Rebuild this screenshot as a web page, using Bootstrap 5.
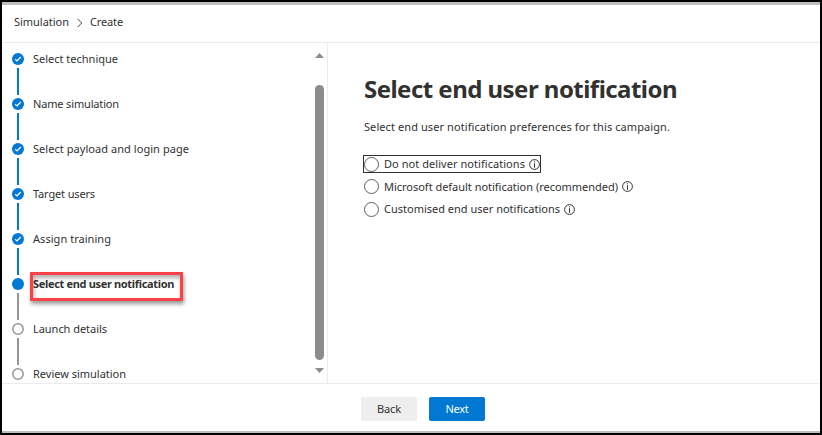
<!DOCTYPE html>
<html lang="en">
<head>
<meta charset="utf-8">
<meta name="viewport" content="width=device-width, initial-scale=1">
<title>Select end user notification</title>
<link rel="stylesheet" href="https://cdn.jsdelivr.net/npm/bootstrap@5.3.0/dist/css/bootstrap.min.css">
<style>
body{font-family:"Noto Sans","Open Sans",sans-serif;font-size:11px;line-height:16px;color:#323130;background:#fff}
.frame{height:435px;border:2px solid #000}
.edge-top{height:3px;background:#bebebe}
.edge-bottom{height:2px;background:#bebebe}
.crumbs{height:38px;border-bottom:1px solid #ebebeb;padding:0 0 3px 12px}
.crumbs svg{margin:1px 7px 0 8px}
.wizard{height:340px}
.side{width:326px;border-right:1px solid #ebebeb}
.steps{width:312px;padding:8px 0 0 10px}
.step{height:45px;flex:none}
.rail{width:12px;margin-right:9px}
.dot{width:12px;height:12px;margin:2px 0 3px;flex:none}
.line{width:2px;height:27px;background:#0078d4;flex:none}
.line.todo{background:#979593}
.callout-box{left:30px;top:272px;width:153px;height:29px;border:3px solid #fa4145;box-shadow:1px 3px 4px rgba(0,0,0,.4),inset 1px 3px 4px rgba(0,0,0,.32)}
.scroller{width:9px;padding:10px 0 9px;margin-left:1px}
.thumb{height:275px;border-radius:5px;background:#8a8d8a;margin:27px 0 8px}
.main-pane{padding:30px 0 0 36px}
h1{font-size:24px;line-height:32px;font-weight:700;margin:0}
.intro{margin:14px 0 20px}
.choice{height:18px;border:1px solid transparent;margin:0 0 4.5px -1px;width:max-content}
.choice.focused{border-color:#323130;width:178px}
.choice input{appearance:none;width:15px;height:15px;border:1px solid #605e5c;border-radius:50%;margin:0 5px 0 0;background:#fff;flex:none}
.choice svg{margin-left:4px}
.foot{height:48px;border-top:1px solid #ebebeb;padding:13px 0 0 359px;gap:12px}
.foot .btn{width:56px;height:24px;border-radius:2px;font-size:11px;line-height:22px;padding:0;border:0}
.btn-back{background:#eee;color:#323130}
.btn-next{background:#0078d4;color:#fff}
.fit{display:inline-block;white-space:nowrap}
</style>
<script src="https://cdn.jsdelivr.net/npm/bootstrap@5.3.0/dist/js/bootstrap.bundle.min.js"></script>
</head>
<body class="overflow-hidden">
<svg class="d-none">
<symbol id="done" viewBox="0 0 12 12"><circle cx="6" cy="6" r="6" fill="#0078d4"/><path d="M3.2 6.3 5 8 8.8 4" fill="none" stroke="#fff" stroke-width="1.2"/></symbol>
<symbol id="now" viewBox="0 0 12 12"><circle cx="6" cy="6" r="6" fill="#0078d4"/></symbol>
<symbol id="todo" viewBox="0 0 12 12"><circle cx="6" cy="6" r="5.2" fill="#fff" stroke="#979593" stroke-width="1.5"/></symbol>
<symbol id="info" viewBox="0 0 11 11"><circle cx="5.5" cy="5.5" r="4.9" fill="none" stroke="#323130"/><path d="M5.5 2.3v1.1M5.5 4.3v4.4" stroke="#323130"/></symbol>
</svg>
<div class="frame d-flex flex-column">
<div class="edge-top"></div>
<nav class="crumbs d-flex align-items-center" aria-label="breadcrumb">
<span class="fit" data-w="55">Simulation</span>
<svg width="6" height="10" viewBox="0 0 6 10"><path d="M.7 1 4.7 5 .7 9" fill="none" stroke="#484644"/></svg>
<span class="fit" data-w="33">Create</span>
</nav>
<div class="wizard d-flex overflow-hidden">
<aside class="side d-flex">
<div class="steps d-flex flex-column">
<div class="step d-flex"><div class="rail d-flex flex-column align-items-center"><svg class="dot"><use href="#done"/></svg><div class="line"></div></div><span class="fit" data-w="85">Select technique</span></div>
<div class="step d-flex"><div class="rail d-flex flex-column align-items-center"><svg class="dot"><use href="#done"/></svg><div class="line"></div></div><span class="fit" data-w="86">Name simulation</span></div>
<div class="step d-flex"><div class="rail d-flex flex-column align-items-center"><svg class="dot"><use href="#done"/></svg><div class="line"></div></div><span class="fit" data-w="156">Select payload and login page</span></div>
<div class="step d-flex"><div class="rail d-flex flex-column align-items-center"><svg class="dot"><use href="#done"/></svg><div class="line"></div></div><span class="fit" data-w="62">Target users</span></div>
<div class="step d-flex"><div class="rail d-flex flex-column align-items-center"><svg class="dot"><use href="#done"/></svg><div class="line"></div></div><span class="fit" data-w="78">Assign training</span></div>
<div class="step d-flex"><div class="rail d-flex flex-column align-items-center"><svg class="dot"><use href="#now"/></svg><div class="line todo"></div></div><span class="fit fw-bold" data-w="141">Select end user notification</span></div>
<div class="step d-flex"><div class="rail d-flex flex-column align-items-center"><svg class="dot"><use href="#todo"/></svg><div class="line todo"></div></div><span class="fit" data-w="74">Launch details</span></div>
<div class="step d-flex"><div class="rail d-flex flex-column align-items-center"><svg class="dot"><use href="#todo"/></svg></div><span class="fit" data-w="93">Review simulation</span></div>
</div>
<div class="scroller d-flex flex-column">
<svg width="9" height="5" viewBox="0 0 9 5" class="flex-shrink-0"><path d="M0 5 4.5 0 9 5z" fill="#8a8d8a"/></svg>
<div class="thumb flex-shrink-0"></div>
<svg width="9" height="5" viewBox="0 0 9 5" class="flex-shrink-0"><path d="M0 0h9L4.5 5z" fill="#8a8d8a"/></svg>
</div>
</aside>
<main class="main-pane">
<h1 class="fit" data-w="313">Select end user notification</h1>
<p class="intro"><span class="fit" data-w="306">Select end user notification preferences for this campaign.</span></p>
<label class="choice focused d-flex align-items-center"><input type="radio" name="n"><span class="fit" data-w="141">Do not deliver notifications</span><svg width="11" height="11"><use href="#info"/></svg></label>
<label class="choice d-flex align-items-center"><input type="radio" name="n"><span class="fit" data-w="234">Microsoft default notification (recommended)</span><svg width="11" height="11"><use href="#info"/></svg></label>
<label class="choice d-flex align-items-center"><input type="radio" name="n"><span class="fit" data-w="176">Customised end user notifications</span><svg width="11" height="11"><use href="#info"/></svg></label>
</main>
</div>
<footer class="foot d-flex align-items-start">
<button class="btn btn-back"><span class="fit" data-w="24">Back</span></button>
<button class="btn btn-next"><span class="fit" data-w="23">Next</span></button>
</footer>
<div class="edge-bottom"></div>
</div>
<div class="callout-box position-absolute"></div>
<script>
// Set each label's tracking so that it fills its intended width.
document.querySelectorAll('.fit').forEach(function(e){
  var n=e.textContent.length, w=e.getBoundingClientRect().width, t=+e.dataset.w;
  e.style.letterSpacing=((t-w)/n)+'px';
});
</script>
</body>
</html>
